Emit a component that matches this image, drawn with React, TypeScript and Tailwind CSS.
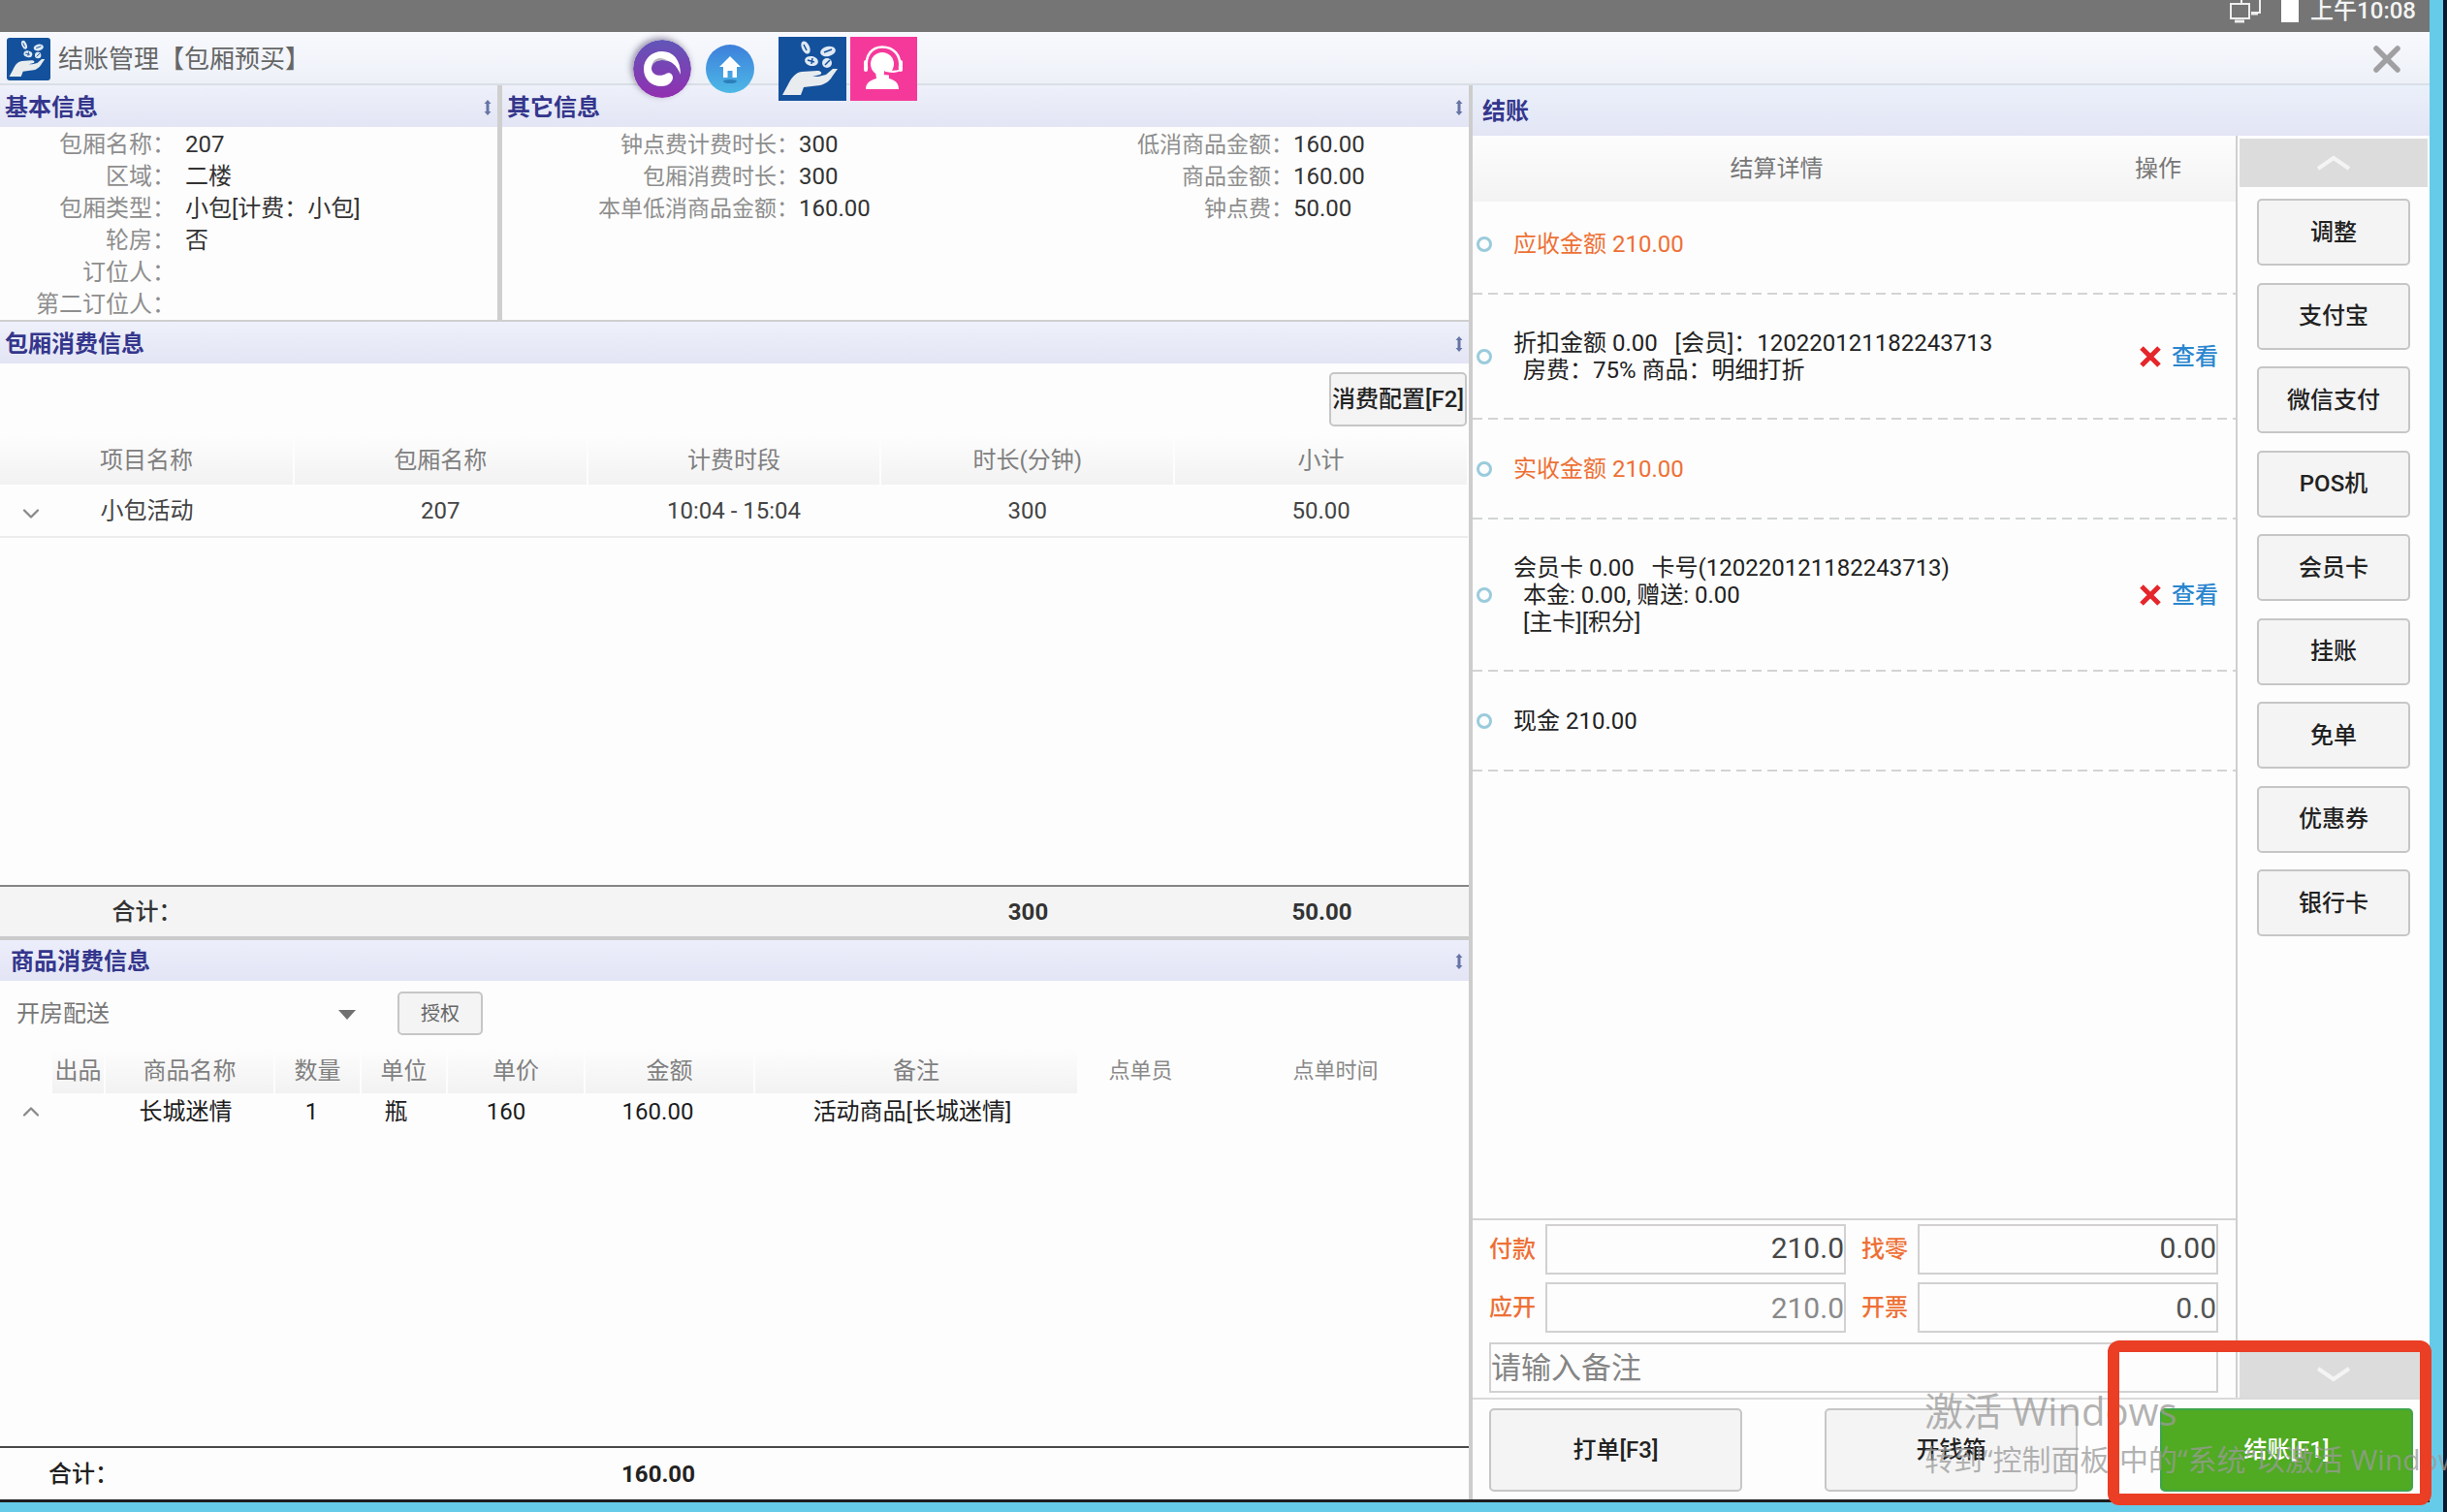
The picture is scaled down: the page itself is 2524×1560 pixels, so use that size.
import { ChevronDown, ChevronUp, X } from 'lucide-react';
import type { ReactNode } from 'react';

type Pair = [string, string];

const basicInfo: Pair[] = [
  ['包厢名称', '207'],
  ['区域', '二楼'],
  ['包厢类型', '小包[计费：小包]'],
  ['轮房', '否'],
  ['订位人', ''],
  ['第二订位人', ''],
];

const otherLeft: Pair[] = [
  ['钟点费计费时长', '300'],
  ['包厢消费时长', '300'],
  ['本单低消商品金额', '160.00'],
];

const otherRight: Pair[] = [
  ['低消商品金额', '160.00'],
  ['商品金额', '160.00'],
  ['钟点费', '50.00'],
];

const roomColumns = ['项目名称', '包厢名称', '计费时段', '时长(分钟)', '小计'];
const roomRow = ['小包活动', '207', '10:04 - 15:04', '300', '50.00'];

const payMethods = ['调整', '支付宝', '微信支付', 'POS机', '会员卡', '挂账', '免单', '优惠券', '银行卡'];

const grayButton =
  'flex items-center justify-center rounded-[5px] border-2 border-[#c6c6c6] bg-[#f4f4f4] font-medium text-[#222] whitespace-nowrap';

function HandCoins({ className }: { className: string }) {
  return (
    <svg viewBox="0 0 70 66" preserveAspectRatio="none" className={className} aria-hidden="true">
      <rect width="70" height="66" fill="#14519c" />
      <path
        d="M4 60 L23 60 L26 52 L43 50 C50 48 53 45 56 40 L61 33 L56 33 L49 39 L41 41 L35 41 L43 39 C46 37 43 35 40 35 L24 36 C17 37 13 43 10 49 Z"
        fill="#e8ecee"
      />
      <g fill="#dfe9f4">
        <ellipse cx="28" cy="11" rx="4" ry="7" transform="rotate(-25 28 11)" />
        <ellipse cx="51" cy="15" rx="8" ry="5" transform="rotate(-12 51 15)" />
        <ellipse cx="34" cy="25" rx="7" ry="5" transform="rotate(12 34 25)" />
        <ellipse cx="50" cy="27" rx="5" ry="5" />
      </g>
      <g stroke="#14519c" strokeWidth="1.5" fill="none">
        <path d="M26 8 L29 14 M47 16 L55 13 M30 24 L37 26 M35 22 L34 28 M48 29 L53 24" />
      </g>
    </svg>
  );
}

function Headset() {
  return (
    <svg viewBox="0 0 69 66" className="h-[66px] w-[69px]" aria-hidden="true">
      <rect width="69" height="66" fill="#f5399a" />
      <path d="M17 33 C15 18 23 10.500 33 10.500 C44 10.500 53 18 51 33" fill="none" stroke="#fff" strokeWidth="2.500" />
      <rect x="14" y="24" width="4" height="12" rx="2" fill="#fff" />
      <rect x="50" y="24" width="4" height="12" rx="2" fill="#fff" />
      <circle cx="33" cy="28" r="12" fill="#fff" />
      <path d="M26 36 H40 L40 43 C47 45 50 48 50 54 H16 C16 48 20 45 27 43 Z" fill="#fff" />
      <path d="M50 36 C46 39 42 38 35 37" fill="none" stroke="#f5399a" strokeWidth="4" />
      <path d="M52 34 C47 37 42 36 36 35" fill="none" stroke="#fff" strokeWidth="2" />
    </svg>
  );
}

function Swirl() {
  return (
    <svg viewBox="0 0 60 60" className="h-[60px] w-[60px] rounded-full shadow-[-2px_-2px_6px_rgba(60,50,90,0.5)]" aria-hidden="true">
      <defs>
        <linearGradient id="swirl" x1="0" y1="0" x2="0" y2="1">
          <stop offset="0" stopColor="#6156b8" />
          <stop offset="1" stopColor="#922fb0" />
        </linearGradient>
      </defs>
      <circle cx="30" cy="30" r="30" fill="url(#swirl)" />
      <path
        d="M49 36 C49 20 41 12 30 12 C19 12 11 20 11 30 C11 41 19 48 29 48 C37 48 41 43 41 39 C41 35 37 33 34 35 C30 38 20 38 19 30 C19 24 24 21 30 21 C39 21 45 26 49 36 Z"
        fill="#fff"
      />
      <path d="M19 28 C20 20 27 16 36 22 C29 20 22 21 19 28 Z" fill="#b9b6bd" />
    </svg>
  );
}

function Home() {
  return (
    <svg viewBox="0 0 50 50" className="h-[50px] w-[50px]" aria-hidden="true">
      <defs>
        <linearGradient id="home" x1="0" y1="0" x2="0" y2="1">
          <stop offset="0" stopColor="#3d7fdb" />
          <stop offset="1" stopColor="#4db9e6" />
        </linearGradient>
      </defs>
      <circle cx="25" cy="25" r="25" fill="url(#home)" />
      <path d="M25 12 L36 23 H32 V34 H27.500 V27 H22.500 V34 H18 V23 H14 Z" fill="#fff" />
      <ellipse cx="25" cy="38" rx="7" ry="2" fill="#2b7fb8" />
    </svg>
  );
}

function Pin() {
  return (
    <svg viewBox="0 0 8 16" className="h-4 w-2" aria-hidden="true">
      <path d="M4 0 L7.500 4 H5.500 V12 H7.500 L4 16 L0.500 12 H2.500 V4 H0.500 Z" fill="#6675a5" />
    </svg>
  );
}

function SectionHeader({ title }: { title: string }) {
  return (
    <div className="flex h-[43px] shrink-0 items-center justify-between bg-linear-to-b from-[#eef0fa] to-[#e3e5f5] pt-0.5 pr-1.5 pl-[5px] font-bold text-[#34368c]">
      <h2>{title}</h2>
      <Pin />
    </div>
  );
}

function InfoList({ rows, labelClass }: { rows: Pair[]; labelClass: string }) {
  return (
    <dl className="pt-0.5 leading-[33px]">
      {rows.map(([label, value]) => (
        <div key={label} className="flex h-[33px]">
          <dt className={`shrink-0 text-right text-[#8e8e8e] ${labelClass}`}>{label}：</dt>
          <dd className="text-[#333]">{value}</dd>
        </div>
      ))}
    </dl>
  );
}

function Th({ children, plain }: { children?: ReactNode; plain?: boolean }) {
  return (
    <th
      className={
        plain
          ? 'text-[22px] font-normal text-[#8a8a8a]'
          : 'border-r-2 border-[#fdfdfd] bg-linear-to-b from-[#fdfdfd] to-[#f2f2f2] font-normal text-[#808080]'
      }
    >
      {children}
    </th>
  );
}

function RoomSection() {
  return (
    <section className="flex flex-[638] flex-col">
      <SectionHeader title="包厢消费信息" />
      <div className="flex justify-end pt-[9px] pr-0.5">
        <button className={`${grayButton} h-[56px] w-[142px]`}>消费配置[F2]</button>
      </div>
      <table className="mt-2.5 w-full table-fixed text-center">
        <thead>
          <tr className="h-[50px]">
            {roomColumns.map((c) => (
              <Th key={c}>{c}</Th>
            ))}
          </tr>
        </thead>
        <tbody>
          <tr className="h-[54px] border-b-2 border-[#ececec] text-[#444]">
            {roomRow.map((v, i) => (
              <td key={v} className="relative">
                {i === 0 && (
                  <button aria-label="展开" className="absolute top-4 left-4">
                    <ChevronDown className="h-7 w-8 text-[#8a8a8a]" strokeWidth={2} />
                  </button>
                )}
                {v}
              </td>
            ))}
          </tr>
        </tbody>
      </table>
      <div className="mt-auto grid h-[57px] grid-cols-5 items-center border-t-2 border-b-4 border-t-[#858585] border-b-[#cbcbcb] bg-[#f4f4f4] text-center text-[#333]">
        <span className="font-medium">合计：</span>
        <span className="col-start-4 font-bold">300</span>
        <span className="font-bold">50.00</span>
      </div>
    </section>
  );
}

function GoodsSection() {
  return (
    <section className="flex flex-[577] flex-col">
      <div className="flex h-[42px] items-center justify-between bg-linear-to-b from-[#eceefb] to-[#e3e5f5] pt-0.5 pr-1.5 pl-[11px] font-bold text-[#34368c]">
        <h2>商品消费信息</h2>
        <Pin />
      </div>
      <div className="flex items-center pt-[11px]">
        <div className="relative">
          <select aria-label="配送方式" className="w-[410px] appearance-none bg-transparent pl-[17px] text-[#777]">
            <option>开房配送</option>
          </select>
          <svg viewBox="0 0 18 10" className="pointer-events-none absolute top-3 left-[349px] h-2.5 w-[18px]" aria-hidden="true">
            <path d="M0 0 H18 L9 10 Z" fill="#707070" />
          </svg>
        </div>
        <button className="h-[45px] w-[88px] rounded-[5px] border-2 border-[#c6c6c6] bg-[#f4f4f4] text-[20px] text-[#666]">授权</button>
      </div>
      <table className="mt-[14px] w-full table-fixed text-center">
        <colgroup>
          <col className="w-[54px]" />
          <col className="w-[54px]" />
          <col className="w-[175px]" />
          <col className="w-[89px]" />
          <col className="w-[89px]" />
          <col className="w-[142px]" />
          <col className="w-[175px]" />
          <col className="w-[334px]" />
          <col className="w-[128px]" />
          <col />
        </colgroup>
        <thead>
          <tr className="h-[46px]">
            <Th plain />
            <Th>出品</Th>
            <Th>商品名称</Th>
            <Th>数量</Th>
            <Th>单位</Th>
            <Th>单价</Th>
            <Th>金额</Th>
            <Th>备注</Th>
            <Th plain>点单员</Th>
            <Th plain>点单时间</Th>
          </tr>
        </thead>
        <tbody>
          <tr className="h-[38px] text-[#1c1c1c]">
            <td>
              <button aria-label="收起" className="block pl-4">
                <ChevronUp className="h-7 w-8 text-[#8a8a8a]" strokeWidth={2} />
              </button>
            </td>
            <td />
            <td className="pr-2">长城迷情</td>
            <td className="pr-3">1</td>
            <td className="pr-4">瓶</td>
            <td className="pr-5">160</td>
            <td className="pr-6">160.00</td>
            <td className="pr-2">活动商品[长城迷情]</td>
            <td />
            <td />
          </tr>
        </tbody>
      </table>
      <div className="mt-auto flex h-[55px] items-center border-t-2 border-[#4a4a4a] text-[#222]">
        <span className="w-[590px] pl-[50px] font-medium">合计：</span>
        <span className="w-[178px] text-center font-bold">160.00</span>
      </div>
    </section>
  );
}

function SettleRow({ className, actions, children }: { className: string; actions?: boolean; children: ReactNode }) {
  return (
    <li className={`flex items-center ${className}`}>
      <span className="ml-1 h-4 w-4 shrink-0 rounded-full border-3 border-[#9acbdc]" />
      <div className="flex-1 pl-[22px] leading-[28px] whitespace-pre">{children}</div>
      {actions && (
        <div className="flex items-center gap-2.5 pr-[18px]">
          <button aria-label="删除">
            <svg viewBox="0 0 24 24" className="h-6 w-6" aria-hidden="true">
              <path d="M3 3 L21 21 M21 3 L3 21" stroke="#e5262b" strokeWidth="5" />
            </svg>
          </button>
          <a href="#detail" className="font-medium text-[#2a86cf]">
            查看
          </a>
        </div>
      )}
    </li>
  );
}

function AmountField({ id, label, value, className }: { id: string; label: string; value: string; className: string }) {
  return (
    <div className="flex flex-1 items-center">
      <label htmlFor={id} className="w-[58px] shrink-0 font-medium text-[#ee7035]">
        {label}
      </label>
      <input
        id={id}
        defaultValue={value}
        className={`h-[52px] w-full min-w-0 border-2 border-[#d2d0d0] bg-transparent text-right text-[30px] ${className}`}
      />
    </div>
  );
}

function PaymentForm() {
  return (
    <form className="flex flex-col border-t-2 border-[#d4d4d4] pt-1 pr-[18px] pb-[5px] pl-[17px]">
      <div className="flex gap-4">
        <AmountField id="pay" label="付款" value="210.0" className="pb-1 text-[#484848]" />
        <AmountField id="change" label="找零" value="0.00" className="pb-1 text-[#484848]" />
      </div>
      <div className="mt-2 flex gap-4">
        <AmountField id="receivable" label="应开" value="210.0" className="text-[#8a8a8a]" />
        <AmountField id="invoice" label="开票" value="0.0" className="text-[#555]" />
      </div>
      <input
        aria-label="备注"
        placeholder="请输入备注"
        className="mt-2.5 h-[52px] w-full border-2 border-[#d2d0d0] bg-transparent text-[31px] placeholder:text-[#858585]"
      />
    </form>
  );
}

function DashedLine() {
  return <li aria-hidden="true" className="h-0.5 bg-[repeating-linear-gradient(90deg,#d2d4d4_0_10px,transparent_10px_16px)]" />;
}

function Arrow({ d }: { d: string }) {
  return (
    <svg viewBox="0 0 36 17" className="h-[17px] w-9" aria-hidden="true">
      <path d={d} fill="none" stroke="#f4f4f4" strokeWidth="4" />
    </svg>
  );
}

function SettlePanel() {
  return (
    <section className="flex w-[991px] shrink-0 flex-col border-l-4 border-[#cdcdcd]">
      <div className="flex h-[52px] items-center bg-linear-to-b from-[#eaf0fa] to-[#e3e5f5] pt-0.5 pl-2.5 font-bold text-[#34368c]">
        <h2>结账</h2>
      </div>
      <div className="flex flex-1">
        <div className="flex flex-1 flex-col border-r-2 border-[#cfcfcf]">
          <div className="flex h-[68px] items-center bg-linear-to-b from-[#fdfdfd] to-[#f3f3f3] text-center text-[#777]">
            <span className="flex-1">结算详情</span>
            <span className="w-[160px]">操作</span>
          </div>
          <ul className="text-[#222]">
            <SettleRow className="h-[94px] pb-1.5 text-[#ee7035]">应收金额 210.00</SettleRow>
            <DashedLine />
            <SettleRow className="h-[127px]" actions>
              {'折扣金额 0.00   [会员]：120220121182243713'}
              <p className="pl-2.5">房费：75% 商品：明细打折</p>
            </SettleRow>
            <DashedLine />
            <SettleRow className="h-[101px] text-[#ee7035]">实收金额 210.00</SettleRow>
            <DashedLine />
            <SettleRow className="h-[155px]" actions>
              {'会员卡 0.00   卡号(120220121182243713)'}
              <p className="pl-2.5">本金: 0.00, 赠送: 0.00</p>
              <p className="pl-2.5">[主卡][积分]</p>
            </SettleRow>
            <DashedLine />
            <SettleRow className="h-[101px]">现金 210.00</SettleRow>
            <DashedLine />
          </ul>
          <div className="flex-1" />
          <PaymentForm />
        </div>
        <div className="flex w-[198px] flex-col items-center px-0.5 pt-[3px]">
          <button aria-label="上翻" className="flex h-[50px] w-full items-center justify-center bg-[#dcdcdc]">
            <Arrow d="M2 14 L18 3 L34 14" />
          </button>
          <div className="flex h-[773px] w-[158px] flex-col justify-between pt-3">
            {payMethods.map((m) => (
              <button key={m} className={`${grayButton} h-[69px] shrink-0`}>
                {m}
              </button>
            ))}
          </div>
          <button aria-label="下翻" className="mt-auto flex h-[50px] w-full items-center justify-center bg-[#dcdcdc]">
            <Arrow d="M2 3 L18 14 L34 3" />
          </button>
        </div>
      </div>
      <div className="flex h-[105px] items-center justify-between border-t-2 border-[#dadada] pr-[17px] pl-[17px]">
        <button className={`${grayButton} h-[86px] w-[261px]`}>打单[F3]</button>
        <button className={`${grayButton} h-[86px] w-[261px]`}>开钱箱</button>
        <button className="h-[86px] w-[261px] rounded-[5px] border-2 border-[#3fa54c] bg-[#50aa22] font-medium text-white">结账[F1]</button>
      </div>
    </section>
  );
}

function StatusBar() {
  return (
    <div className="flex h-[33px] shrink-0 items-center justify-end overflow-hidden bg-[#757575] pr-[14px] pb-3 text-[#f4f4f4]">
      <svg viewBox="0 0 34 26" className="h-[26px] w-[34px]" aria-hidden="true">
        <path d="M13 6 V1 H32 V15 H23" fill="none" stroke="#eee" strokeWidth="2" />
        <path d="M2 6 H21 V21 H2 Z" fill="none" stroke="#eee" strokeWidth="2" />
        <path d="M6 24 H16 M23 16 H30" stroke="#eee" strokeWidth="3" />
      </svg>
      <span className="ml-5 h-6 w-[18px] bg-white" />
      <time className="ml-3 leading-[24px] font-medium">上午10:08</time>
    </div>
  );
}

export default function App() {
  return (
    <div
      lang="zh-CN"
      className="relative flex h-screen w-full overflow-hidden bg-[#66cbe9] font-['Roboto','Noto_Sans_CJK_SC',sans-serif] text-[24px] leading-[32px]"
    >
      <div className="flex min-w-0 flex-1 flex-col pb-2.5">
        <StatusBar />
        <div className="relative flex min-h-0 flex-1 flex-col border-b-3 border-[#1d1d1d] bg-[#fdfdfd]">
          <header className="flex h-[55px] shrink-0 items-center border-b-2 border-[#d9dfe6] bg-linear-to-b from-[#f8f9fe] to-[#edf1f7] pt-0.5 pr-[22px] pl-[7px]">
            <HandCoins className="h-[44px] w-[45px] rounded-[3px]" />
            <h1 className="ml-2 text-[26px] text-[#666]">结账管理【包厢预买】</h1>
            <button aria-label="关闭" className="ml-auto">
              <X className="h-[44px] w-[44px] text-[#a0a0a3]" strokeWidth={3} />
            </button>
          </header>

          {/* Floating shortcuts */}
          <div className="absolute top-[5px] left-[653px] flex items-center">
            <Swirl />
            <span className="ml-[15px]">
              <Home />
            </span>
            <span className="ml-[25px]">
              <HandCoins className="h-[66px] w-[70px]" />
            </span>
            <span className="ml-1">
              <Headset />
            </span>
          </div>

          <main className="flex min-h-0 flex-1">
            <div className="flex min-w-0 flex-1 flex-col">
              <div className="flex h-[244px] shrink-0 border-b-2 border-[#cfcfcf]">
                <section className="w-[518px] border-r-5 border-[#cfcfcf]">
                  <SectionHeader title="基本信息" />
                  <InfoList rows={basicInfo} labelClass="w-[191px] pr-2.5" />
                </section>
                <section className="flex-1">
                  <SectionHeader title="其它信息" />
                  <div className="grid grid-cols-[510px_1fr]">
                    <InfoList rows={otherLeft} labelClass="w-[306px] text-[23px]" />
                    <InfoList rows={otherRight} labelClass="w-[306px] text-[23px]" />
                  </div>
                </section>
              </div>
              <RoomSection />
              <GoodsSection />
            </div>
            <SettlePanel />
          </main>
        </div>
      </div>
      <div className="ml-[14px] w-1 shrink-0 bg-[#0d1a2c]" />

      {/* Desktop activation notice */}
      <div className="pointer-events-none absolute right-0 bottom-8 w-[539px] overflow-hidden font-['Open_Sans','Noto_Sans_CJK_SC',sans-serif] whitespace-nowrap text-[#9a9a9a]/75">
        <p className="text-[40px] leading-[56px]">激活 Windows</p>
        <p className="text-[30px] leading-[44px]">转到“控制面板”中的“系统”以激活 Windows。</p>
      </div>

      <div className="pointer-events-none absolute right-[16px] bottom-[7px] h-[170px] w-[334px] rounded-[12px] border-12 border-[#ea3e25]" />
    </div>
  );
}
